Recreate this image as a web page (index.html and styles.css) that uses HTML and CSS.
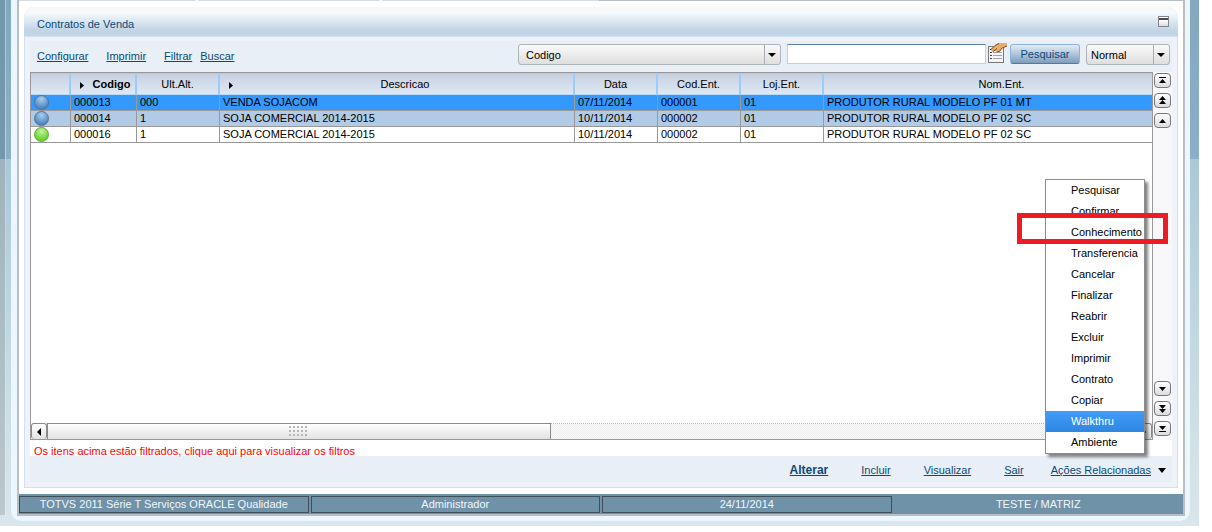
FILE: index.html
```html
<!DOCTYPE html>
<html lang="pt-BR">
<head>
<meta charset="utf-8">
<title>Contratos de Venda</title>
<link rel="stylesheet" href="styles.css">
</head>
<body>
<div class="backdrop">
  <div class="rim">
    <div class="window">
      <div class="tabs"><span></span><span></span><span></span></div>
      <main class="panel">
        <header class="panel-head">
          <h1>Contratos de Venda</h1>
          <button class="minimize" type="button" aria-label="Minimizar"></button>
        </header>
        <div class="panel-body">
          <div class="toolbar">
            <nav class="links">
              <a href="#">Configurar</a>
              <a href="#">Imprimir</a>
              <span class="pair"><a href="#">Filtrar</a><a href="#">Buscar</a></span>
            </nav>
            <form class="search">
              <span class="select field-key">
                <select aria-label="Campo de pesquisa"><option>Codigo</option></select>
                <svg class="caret" width="8" height="4"><path d="M0 0h8L4 4z"/></svg>
              </span>
              <input class="query" type="text" aria-label="Pesquisa">
              <button class="options" type="button" aria-label="Opções de pesquisa">
                <svg width="20" height="20" viewBox="0 0 20 20">
                  <rect x="1.500" y="3.500" width="15" height="16" fill="#f5f5f5" stroke="#77777a"/>
                  <path d="M6 9.500h9M6 12.500h9M6 15.500h9" stroke="#a2a2a2"/>
                  <path d="M3 9.500h2M3 12.500h2M3 15.500h2M3 6.500h2" stroke="#444"/>
                  <path d="M4 6 8 2l4-2h8v3l-5 2-2 3-3 1-2-1-3 1z" fill="#e8ad6c"/>
                  <path d="M4 6.500l4-4 4-2M6 8.500l4-3M10 9l3-1 2-3 5-2" fill="none" stroke="#7d5228"/>
                </svg>
              </button>
              <button class="go" type="button">Pesquisar</button>
              <span class="select mode">
                <select aria-label="Modo"><option>Normal</option></select>
                <svg class="caret" width="8" height="4"><path d="M0 0h8L4 4z"/></svg>
              </span>
            </form>
          </div>
          <div class="browse">
            <div class="grid-box">
              <div class="rows">
                <table>
                  <colgroup><col class="c-status"><col class="c-code"><col class="c-mid"><col class="c-desc"><col class="c-mid"><col class="c-mid"><col class="c-mid"><col></colgroup>
                  <thead>
                    <tr>
                      <th></th>
                      <th class="sorted"><svg width="4" height="7"><path d="M0 0v7l4-3.500z"/></svg>Codigo</th>
                      <th>Ult.Alt.</th>
                      <th class="sortable"><svg width="4" height="7"><path d="M0 0v7l4-3.500z"/></svg>Descricao</th>
                      <th>Data</th><th>Cod.Ent.</th><th>Loj.Ent.</th><th>Nom.Ent.</th>
                    </tr>
                  </thead>
                  <tbody>
                    <tr class="selected"><td><i class="ball"></i></td><td>000013</td><td>000</td><td>VENDA SOJACOM</td><td>07/11/2014</td><td>000001</td><td>01</td><td>PRODUTOR RURAL MODELO PF 01 MT</td></tr>
                    <tr class="alt"><td><i class="ball"></i></td><td>000014</td><td>1</td><td>SOJA COMERCIAL 2014-2015</td><td>10/11/2014</td><td>000002</td><td>01</td><td>PRODUTOR RURAL MODELO PF 02 SC</td></tr>
                    <tr><td><i class="ball green"></i></td><td>000016</td><td>1</td><td>SOJA COMERCIAL 2014-2015</td><td>10/11/2014</td><td>000002</td><td>01</td><td>PRODUTOR RURAL MODELO PF 02 SC</td></tr>
                  </tbody>
                </table>
              </div>
              <div class="hscroll">
                <button type="button" aria-label="Esquerda"><svg width="4" height="8"><path d="M4 0v8L0 4z"/></svg></button>
                <div class="thumb"><i class="grip"></i></div>
                <div class="track"></div>
                <button type="button" aria-label="Direita"><svg width="4" height="8"><path d="M0 0v8l4-4z"/></svg></button>
              </div>
            </div>
            <div class="vscroll">
              <button type="button" aria-label="Primeiro"><svg width="9" height="9"><path d="M1 1h7v1H1zM4.500 3 8 7H1z"/></svg></button>
              <button type="button" aria-label="Página acima"><svg width="9" height="9"><path d="M4.500 0 8 4H1zM4.500 4 8 8H1z"/></svg></button>
              <button type="button" aria-label="Acima"><svg width="9" height="9"><path d="M4.500 3 8 7H1z"/></svg></button>
              <button class="down" type="button" aria-label="Abaixo"><svg width="9" height="9"><path d="M1 3h7L4.500 7z"/></svg></button>
              <button type="button" aria-label="Página abaixo"><svg width="9" height="9"><path d="M1 1h7L4.500 5zM1 5h7L4.500 9z"/></svg></button>
              <button type="button" aria-label="Último"><svg width="9" height="9"><path d="M1 2h7L4.500 6zM1 7h7v1H1z"/></svg></button>
            </div>
          </div>
          <a class="notice" href="#">Os itens acima estão filtrados, clique aqui para visualizar os filtros</a>
          <footer class="actions">
            <a class="primary" href="#">Alterar</a>
            <a href="#">Incluir</a>
            <a href="#">Visualizar</a>
            <a href="#">Sair</a>
            <a href="#">Ações Relacionadas</a>
            <svg width="8" height="5"><path d="M0 0h8L4 5z"/></svg>
            <div class="menu">
              <button type="button">Pesquisar</button>
              <button type="button">Confirmar</button>
              <button type="button">Conhecimento</button>
              <button type="button">Transferencia</button>
              <button type="button">Cancelar</button>
              <button type="button">Finalizar</button>
              <button type="button">Reabrir</button>
              <button type="button">Excluir</button>
              <button type="button">Imprimir</button>
              <button type="button">Contrato</button>
              <button type="button">Copiar</button>
              <button class="active" type="button">Walkthru</button>
              <button type="button">Ambiente</button>
              <span class="marker"></span>
            </div>
          </footer>
        </div>
      </main>
      <div class="status"><span>TOTVS 2011 Série T Serviços ORACLE Qualidade</span><span>Administrador</span><span>24/11/2014</span><span>TESTE / MATRIZ</span></div>
    </div>
  </div>
</div>
</body>
</html>
```
FILE: styles.css
```css
* { box-sizing: border-box; }
body {
  margin: 0;
  padding: 0 13px 6px 0;
  min-height: 100vh;
  display: flex;
  background: #fff;
  font: 11px/14px "Liberation Sans", Arial, sans-serif;
  color: #000;
}
button, input, select { font: inherit; color: inherit; margin: 0; padding: 0; }
a { color: #0b4a78; }
svg { display: block; }

.backdrop {
  flex: 1;
  display: flex;
  padding: 0 9px 5px 11px;
  background:
    linear-gradient(#7597ab 0 159px, #9fb3be 159px, #bac7cb) 0 0 / 5px calc(100% - 11px) no-repeat,
    linear-gradient(#a9c6d8, #e3ecf0) 5px 0 / 1px calc(100% - 11px) no-repeat,
    linear-gradient(#82a8c1, #8bafc6 159px, #a9c8d8 159px, #cddfe6 420px, #d9e6eb);
}
.rim {
  flex: 1;
  display: flex;
  padding: 0 5px 5px 6px;
  background: #ecf6fe;
  border-radius: 0 0 10px 10px;
}
.window {
  flex: 1;
  min-width: 0;
  display: flex;
  flex-direction: column;
  background: #fff;
  border: solid #b9bec3;
  border-width: 0 2px 2px;
}
.tabs { display: flex; height: 1px; gap: 2px; }
.tabs span { width: 182px; background: #d3dee7; }
.tabs span:first-child { width: 177px; }
.tabs span:last-child { width: auto; flex: 1; background: linear-gradient(90deg, #d3dee7 217px, #b9bec3 217px); }

.panel {
  flex: 1;
  display: flex;
  flex-direction: column;
  margin: 6px 5px;
  border-radius: 10px 10px 0 0;
  background: #eff2f8;
  border: 1px solid #d2e0ee;
  border-top: 0;
}
.panel-head {
  display: flex;
  align-items: center;
  justify-content: space-between;
  height: 30px;
  margin: 0 -1px;
  padding: 4px 9px 0 13px;
  border-radius: 10px 10px 0 0;
  border-bottom: 1px solid #cfe1f2;
  background: linear-gradient(#f5f9fc 0 6px, #dce8f1 14px, #c2d5e6 23px, #c2d5e6);
}
.panel-head h1 { margin: 0; font-size: 11px; font-weight: normal; color: #0b4a78; }
.minimize {
  width: 11px;
  height: 11px;
  margin-bottom: 4px;
  border: 1px solid #83838a;
  background: linear-gradient(#fff 1px, #4a4a5c 1px 3px, #fff 3px, #dcdce6);
}
.panel-body { flex: 1; display: flex; flex-direction: column; margin: 0 5px 5px; background: #e8eff6; }

.toolbar { display: flex; justify-content: space-between; align-items: flex-start; height: 35px; padding: 7px 2px 0 7px; background: linear-gradient(#eff2f8 4px, #e8eff6 4px); }
.links { display: flex; gap: 18px; padding-top: 5px; }
.pair { display: flex; gap: 8px; }
.search { flex: 0 1 652px; display: flex; align-items: flex-start; }
.select { display: grid; align-items: center; height: 21px; }
.select select {
  grid-area: 1 / 1;
  appearance: none;
  width: 100%;
  height: 21px;
  padding: 0 20px 0 7px;
  border: 1px solid #b0b4b8;
  border-radius: 3px;
  background: linear-gradient(#a9adb1, #a9adb1) right 15px top / 1px 100% no-repeat, linear-gradient(#fafafa, #dedede);
}
.mode select { padding-left: 4px; }
.caret { grid-area: 1 / 1; justify-self: end; margin-right: 5px; pointer-events: none; }
.field-key { flex: 4; }
.mode { width: 84px; }
.query { flex: 3; min-width: 0; height: 20px; margin: 0 2px 0 6px; border: 1px solid #b0d4f8; border-top-color: #5b80ad; background: #fff; }
.options { width: 20px; height: 20px; margin: -1px 0 0 -1px; border: 0; background: none; }
.go {
  width: 70px;
  height: 20px;
  margin: 0 6px 0 3px;
  border: 1px solid #8db4dc;
  border-bottom-color: #58789b;
  border-radius: 3px;
  background: linear-gradient(#e3ecf5, #7e9dbd);
  color: #0b4a78;
}

.browse { flex: 1; display: flex; }
.grid-box { flex: 1; min-width: 0; display: flex; flex-direction: column; border: 1px solid #999; background: #fff; }
.rows { flex: 1; overflow: hidden; }
table { width: calc(100% + 29px); table-layout: fixed; border-collapse: separate; border-spacing: 0; }
.c-status { width: 40px; }
.c-code { width: 66px; }
.c-mid { width: 83px; }
.c-desc { width: 355px; }
th {
  height: 22px;
  padding: 0;
  font-weight: normal;
  text-align: center;
  border-right: 2px solid #99ccff;
  border-top: 1px solid #99ccff;
  border-bottom: 1px solid #b9d9f8;
  background: linear-gradient(#c6d0df, #dfe9f5);
}
th svg { float: left; margin: 5px 4px 0 9px; }
.sorted { font-weight: bold; }
td { height: 16px; padding: 0 0 0 3px; line-height: 14px; vertical-align: top; border-right: 1px solid #999; border-bottom: 1px solid #999; white-space: nowrap; }
.selected td { background: #3399ff; }
.alt td { background: #b1cae6; }
.ball {
  display: block;
  width: 15px;
  height: 15px;
  border: 1px solid #58738e;
  border-radius: 50%;
  background: radial-gradient(circle at 50% 25%, #a9cdf0, #4c86c0 75%);
}
.ball.green { border-color: #62a53c; background: radial-gradient(circle at 50% 25%, #c4f59a, #66cf2c 75%); }

.hscroll { display: flex; height: 16px; }
.hscroll button, .thumb { display: grid; place-items: center; border: 1px solid #8a8a8a; border-bottom: 0; background: linear-gradient(#fff, #e2e2e2); }
.hscroll button { width: 16px; border-radius: 3px; }
.thumb { width: 45%; }
.grip { width: 20px; height: 11px; background: radial-gradient(circle at 1px 1px, #b5b5b5 1px, transparent 1px) 0 0 / 4px 4px; }
.track { flex: 1; background: repeating-conic-gradient(#ececec 0 25%, #fbfbfb 0 50%) 0 0 / 2px 2px; border-top: 1px dotted #bbb; }

.vscroll { width: 19px; display: flex; flex-direction: column; align-items: center; gap: 5px; padding: 1px 0 4px; background: #f8f8fb; }
.vscroll button { display: grid; place-items: center; width: 17px; height: 15px; border: 1px solid #77777a; border-radius: 4px; background: linear-gradient(#fff, #dcdce0); }
.vscroll .down { margin-top: auto; }

.notice { height: 16px; padding: 4px 4px 0; background: #fff; color: #f00; text-decoration: none; }
.actions { position: relative; display: flex; align-items: center; justify-content: flex-end; height: 26px; padding: 2px 6px 0 0; }
.actions a { margin-right: 33px; }
.actions .primary { font-size: 12px; font-weight: bold; }
.actions a:nth-of-type(4) { margin-right: 27px; }
.actions a:last-of-type { margin-right: 7px; }

.menu {
  position: absolute;
  right: 27px;
  bottom: calc(100% + 2px);
  width: 100px;
  display: flex;
  flex-direction: column;
  border: 1px solid #8c8c8c;
  background: #fff;
  box-shadow: 3px 3px 3px rgba(0, 0, 0, .5);
}
.menu button { height: 21px; padding: 0 0 2px 25px; border: 0; background: none; text-align: left; }
.menu .active { background: linear-gradient(#429cfa, #2f86e2); color: #fff; }
.marker { position: absolute; left: -29px; right: -24px; top: 33px; height: 31px; border: 5px solid #ed1c24; pointer-events: none; }

.status { display: grid; grid-template-columns: repeat(4, 1fr); gap: 2px; height: 20px; padding: 2px 0 1px; background: #6f92a9; color: #f0f6fa; text-align: center; }
.status span { border: 1px solid #3c4f5b; line-height: 15px; }
.status span:last-child { border-color: transparent; }
```
